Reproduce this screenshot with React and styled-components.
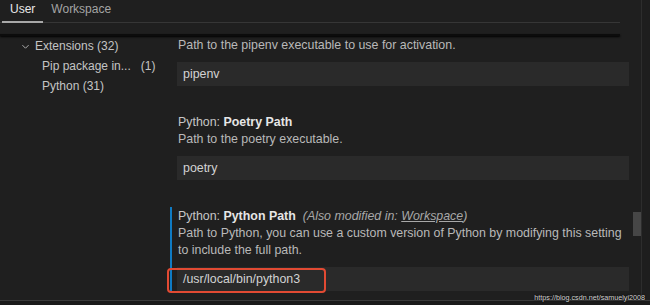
import styled, { createGlobalStyle } from "styled-components";

const GlobalStyle = createGlobalStyle`
  html, body {
    margin: 0;
    padding: 0;
    background: #1f1f1f;
  }
  body {
    font-family: "Liberation Sans", Arial, sans-serif;
  }
`;

const tocItems = [
  { label: "Extensions (32)", level: 0, open: true },
  { label: "Pip package in...", count: "(1)", level: 1 },
  { label: "Python (31)", level: 1 },
];

const App = () => {
  return (
    <Page>
      <GlobalStyle />
      <Main>
        <Editor>
          <Header>
            <Tab $active>User</Tab>
            <Tab>Workspace</Tab>
          </Header>
          <TopShadow />
          <Body>
            <Toc>
              {tocItems.map((item) => (
                <TocRow key={item.label} $level={item.level}>
                  {item.open && (
                    <Chevron viewBox="0 0 16 16">
                      <path d="M3.5 6 L8 10.5 L12.5 6" />
                    </Chevron>
                  )}
                  <span>{item.label}</span>
                  {item.count && <Count>{item.count}</Count>}
                </TocRow>
              ))}
            </Toc>
            <List>
              <Setting>
                <Desc>Path to the pipenv executable to use for activation.</Desc>
                <Input>pipenv</Input>
              </Setting>
              <Setting>
                <Title>
                  Python: <b>Poetry Path</b>
                </Title>
                <Desc>Path to the poetry executable.</Desc>
                <Input>poetry</Input>
              </Setting>
              <Setting $focused>
                <Title>
                  Python: <b>Python Path</b>
                  <Modified>
                    (Also modified in: <u>Workspace</u>)
                  </Modified>
                </Title>
                <Desc>
                  Path to Python, you can use a custom version of Python by modifying this setting
                  to include the full path.
                </Desc>
                <Input>
                  /usr/local/bin/python3
                  <Highlight />
                </Input>
              </Setting>
            </List>
          </Body>
          <Thumb />
        </Editor>
        <Side />
      </Main>
      <Footer />
      <Watermark>https://blog.csdn.net/samuelyi2008</Watermark>
    </Page>
  );
};

export default App;

const Page = styled.div`
  position: relative;
  width: 650px;
  height: 305px;
  overflow: hidden;
  background: #1f1f1f;
  color: #cccccc;
`;

const Main = styled.div`
  display: flex;
  height: 300px;
`;

const Editor = styled.div`
  position: relative;
  width: 641px;
  border-right: 1px solid #2d2d2d;
`;

const Side = styled.div`
  flex: 1;
  background: #1e1e1e;
`;

const Header = styled.div`
  display: flex;
  height: 22px;
  margin-right: 21px;
  border-bottom: 1px solid #363636;
  padding-left: 2px;
`;

const Tab = styled.div`
  padding: 0 8px;
  font-size: 12px;
  line-height: 19px;
  color: ${(p) => (p.$active ? "#e8e8e8" : "#a4a4a4")};
  border-bottom: 2px solid ${(p) => (p.$active ? "#a8a8a8" : "transparent")};
  margin-bottom: -1px;
`;

const TopShadow = styled.div`
  height: 2px;
  margin: 11px 21px 0 0;
  background: #0c0c0c;
  box-shadow: 0 1px 2px #000;
`;

const Body = styled.div`
  display: flex;
`;

const Toc = styled.div`
  width: 170px;
  flex-shrink: 0;
`;

const TocRow = styled.div`
  display: flex;
  align-items: center;
  height: 20px;
  padding-left: ${(p) => (p.$level ? 42 : 20)}px;
  font-size: 12px;
  color: #c4c4c4;
  white-space: nowrap;
`;

const Chevron = styled.svg`
  width: 11px;
  height: 11px;
  margin-right: 4px;
  fill: none;
  stroke: #b0b0b0;
  stroke-width: 1.4;
`;

const Count = styled.span`
  margin-left: 10px;
`;

const List = styled.div`
  flex: 1;
  padding: 1px 12px 0 0;
`;

const Setting = styled.div`
  position: relative;
  padding-left: 6px;
  margin-bottom: 27px;
  border-left: 2px solid ${(p) => (p.$focused ? "#0f7bc4" : "transparent")};
`;

const Title = styled.div`
  font-size: 12.4px;
  line-height: 18px;
  color: #c6c6c6;
  white-space: nowrap;

  b {
    color: #e6e6e6;
  }
`;

const Modified = styled.i`
  margin-left: 7px;
  color: #a8a8a8;
`;

const Desc = styled.div`
  font-size: 12.4px;
  line-height: 17px;
  color: #b9b9b9;
`;

const Input = styled.div`
  position: relative;
  margin: 8px 0 0 -1px;
  height: 24px;
  padding-left: 6px;
  background: #2a2a2a;
  font-size: 12.4px;
  line-height: 24px;
  color: #d2d2d2;
`;

const Highlight = styled.div`
  position: absolute;
  left: -10px;
  top: 1px;
  width: 159px;
  height: 25px;
  box-sizing: border-box;
  border: 2px solid #e24a33;
  border-radius: 4px;
`;

const Thumb = styled.div`
  position: absolute;
  right: 0;
  top: 212px;
  width: 8px;
  height: 24px;
  background: #464646;
`;

const Footer = styled.div`
  height: 4px;
  border-top: 1px solid #3a3a3a;
  background: #1a1a1a;
`;

const Watermark = styled.div`
  position: absolute;
  right: 5px;
  bottom: 3px;
  font-size: 7.2px;
  color: #d0d0d0;
  text-shadow: 0 0 2px #000;
`;
